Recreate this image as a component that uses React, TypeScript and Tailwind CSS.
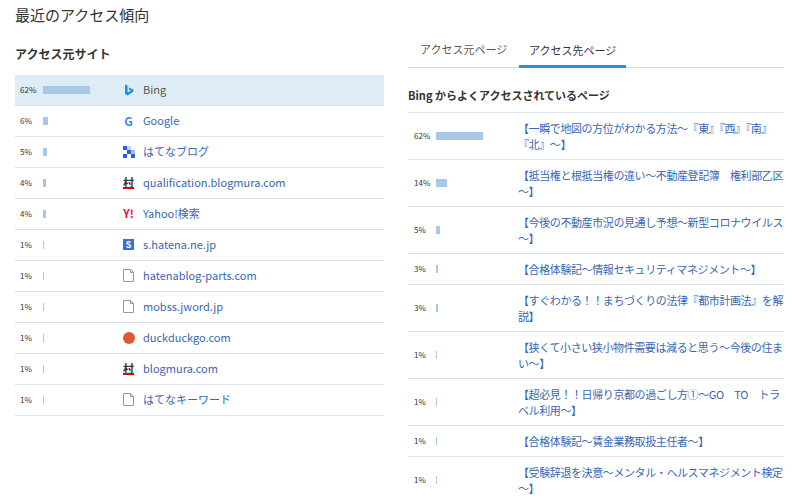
const font = { fontFamily: '"Noto Sans CJK JP", "Noto Sans", sans-serif' };

type Src = { pct: number; name: string; icon: string; active?: boolean };

const sources: Src[] = [
  { pct: 62, name: "Bing", icon: "bing", active: true },
  { pct: 6, name: "Google", icon: "google" },
  { pct: 5, name: "はてなブログ", icon: "hatenablog" },
  { pct: 4, name: "qualification.blogmura.com", icon: "mura" },
  { pct: 4, name: "Yahoo!検索", icon: "yahoo" },
  { pct: 1, name: "s.hatena.ne.jp", icon: "s" },
  { pct: 1, name: "hatenablog-parts.com", icon: "page" },
  { pct: 1, name: "mobss.jword.jp", icon: "page" },
  { pct: 1, name: "duckduckgo.com", icon: "duck" },
  { pct: 1, name: "blogmura.com", icon: "mura" },
  { pct: 1, name: "はてなキーワード", icon: "page" },
];

const pages = [
  { pct: 62, title: "【一瞬で地図の方位がわかる方法～『東』『西』『南』『北』～】" },
  { pct: 14, title: "【抵当権と根抵当権の違い～不動産登記簿　権利部乙区～】" },
  { pct: 5, title: "【今後の不動産市況の見通し予想～新型コロナウイルス～】" },
  { pct: 3, title: "【合格体験記～情報セキュリティマネジメント～】" },
  { pct: 3, title: "【すぐわかる！！まちづくりの法律『都市計画法』を解説】" },
  { pct: 1, title: "【狭くて小さい狭小物件需要は減ると思う～今後の住まい～】" },
  { pct: 1, title: "【超必見！！日帰り京都の過ごし方①～GO　TO　トラベル利用～】" },
  { pct: 1, title: "【合格体験記～賃金業務取扱主任者～】" },
  { pct: 1, title: "【受験辞退を決意～メンタル・ヘルスマネジメント検定～】" },
];

function Icon({ kind }: { kind: string }) {
  if (kind === "bing")
    return (
      <svg width="12" height="12" viewBox="0 0 12 12">
        <path d="M2 0.5l2.6 0.9v7.2l3.3-1.9-1.6-0.8-1-2.4 5 1.7v2.6L4.6 11.5 2 10z" fill="#1b8fe0" />
      </svg>
    );
  if (kind === "google")
    return <span className="text-[12px] font-bold text-[#4285f4] leading-none">G</span>;
  if (kind === "hatenablog")
    return (
      <svg width="12" height="12" viewBox="0 0 12 12">
        <rect x="0" y="0" width="4" height="4" fill="#2d5fd6" />
        <rect x="4" y="4" width="4" height="4" fill="#2d5fd6" />
        <rect x="8" y="4" width="4" height="4" fill="#9fb8ee" />
        <rect x="0" y="8" width="4" height="4" fill="#2d5fd6" />
        <rect x="8" y="8" width="4" height="4" fill="#2d5fd6" />
        <rect x="4" y="0" width="4" height="4" fill="#c7d6f5" />
      </svg>
    );
  if (kind === "mura")
    return (
      <span className="flex flex-col items-center leading-none">
        <span className="text-[11px] font-bold text-[#333]">村</span>
        <span className="block w-[11px] h-[2px] bg-[#d00] -mt-[1px]" />
      </span>
    );
  if (kind === "yahoo")
    return <span className="text-[11px] font-bold text-[#ff0033] leading-none">Y!</span>;
  if (kind === "s")
    return (
      <span className="w-[11px] h-[11px] bg-[#3d6fd1] text-white text-[9px] font-bold flex items-center justify-center leading-none">
        S
      </span>
    );
  if (kind === "duck")
    return <span className="w-[12px] h-[12px] rounded-full bg-[#de5833] block" />;
  return (
    <svg width="11" height="13" viewBox="0 0 11 13">
      <path d="M0.5 0.5h7l3 3v9h-10z" fill="#fff" stroke="#999" />
      <path d="M7.5 0.5v3h3" fill="none" stroke="#999" />
    </svg>
  );
}

export default function App() {
  return (
    <div className="w-[800px] h-[496px] overflow-hidden bg-white text-[#333]" style={font}>
      <h1 className="pl-[15px] pt-[4px] text-[15px] text-[#333]">最近のアクセス傾向</h1>
      <div className="flex px-[15px] gap-[24px] mt-[4px]">
        <div className="w-[369px]">
          <h2 className="text-[12px] font-bold mt-[14px] h-[30px] leading-[18px]">アクセス元サイト</h2>
          <div>
            {sources.map((s, i) => (
              <div
                key={i}
                className={`flex items-center h-[31px] border-b border-[#dde3e8] ${s.active ? "bg-[#deedf5]" : ""}`}
              >
                <span className="w-[28px] pl-[5px] text-[8px] text-[#333]">{s.pct}%</span>
                <div className="w-[77px]">
                  <div className="h-[8px] bg-[#a9c8e8]" style={{ width: Math.max(1, s.pct * 0.76) }} />
                </div>
                <span className="w-[17px] flex justify-center">
                  <Icon kind={s.icon} />
                </span>
                <span className={`text-[11px] ml-[6px] ${s.active ? "text-[#555]" : "text-[#3a66b0]"}`}>{s.name}</span>
              </div>
            ))}
          </div>
        </div>
        <div className="w-[376px]">
          <div className="flex border-b border-[#d5dde3] h-[37px] items-end">
            <div className="px-[12px] h-[34px] text-[11px] text-[#555] flex items-center">アクセス元ページ</div>
            <div className="w-[107px] h-[34px] text-[11px] text-[#333] flex items-center justify-center border-b-[3px] border-[#2c8fd8] -mb-[1px] pt-[3px]">
              アクセス先ページ
            </div>
          </div>
          <h2 className="text-[11px] font-bold mt-[19px] h-[25px]">Bing からよくアクセスされているページ</h2>
          <div className="border-t border-[#dde3e8]">
            {pages.map((p, i) => (
              <div key={i} className="flex items-center min-h-[30px] py-[7px] border-b border-[#dde3e8]">
                <span className="w-[28px] pl-[6px] text-[8px] shrink-0">{p.pct}%</span>
                <div className="w-[82px] shrink-0">
                  <div className="h-[8px] bg-[#a9c8e8]" style={{ width: Math.max(1, p.pct * 0.76) }} />
                </div>
                <span className="text-[11px] leading-[16px] tracking-[-0.4px] text-[#3a66b0]">{p.title}</span>
              </div>
            ))}
          </div>
        </div>
      </div>
    </div>
  );
}
